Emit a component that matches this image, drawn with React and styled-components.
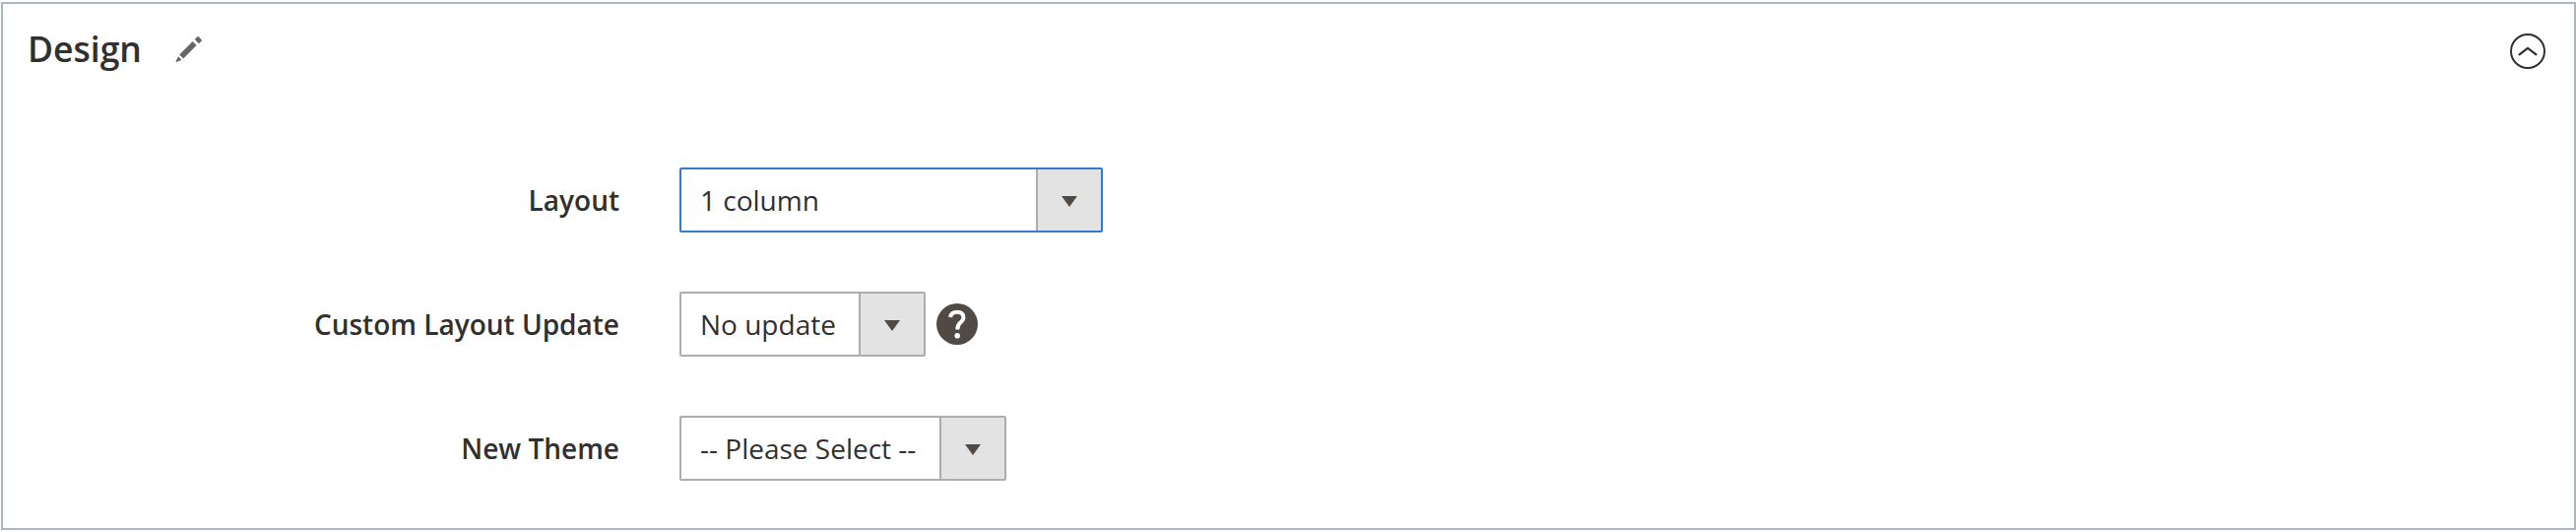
import React from "react";
import styled, { createGlobalStyle } from "styled-components";

const GlobalStyle = createGlobalStyle`
  *, *::before, *::after { box-sizing: border-box; }
  body { margin: 0; background: #fff; color: #303030; font-family: "Open Sans", sans-serif; }
`;

const Page = styled.main`
  height: 540px;
  padding: 2px 0 2px 1px;
`;

const Fieldset = styled.section`
  height: 536px;
  border: 2px solid #a9b8be;
`;

const Header = styled.header`
  display: flex;
  align-items: center;
  height: 92px;
  padding: 0 29px 0 25px;
`;

const Title = styled.h2`
  margin: 0;
  padding-bottom: 2px;
  font-size: 35.5px;
  font-weight: 600;
  line-height: 46px;
`;

const IconButton = styled.button`
  display: flex;
  padding: 0;
  border: 0;
  background: none;
  margin-left: ${({ $push }) => ($push ? "auto" : "34px")};
  margin-top: ${({ $push }) => ($push ? "4px" : "0")};
`;

const Fields = styled.div`
  display: grid;
  gap: 60px;
  padding-top: 74px;
`;

const Field = styled.div`
  display: grid;
  grid-template-columns: 626px 1fr;
  column-gap: 61px;
  align-items: center;
  height: 66px;
`;

const Label = styled.label`
  font-size: 28px;
  font-weight: 600;
  line-height: 38px;
  text-align: right;
`;

const Control = styled.div`
  display: flex;
  align-items: center;
  gap: 11px;
`;

const Select = styled.button`
  display: flex;
  width: ${({ $width }) => $width}px;
  height: 66px;
  padding: 0;
  border: 2px solid ${({ $focused }) => ($focused ? "#2f7bd6" : "#adadad")};
  border-radius: 2px;
  background: #fff;
  color: #303030;
  font: 400 28px/62px "Open Sans", sans-serif;
  text-align: left;
`;

const Value = styled.span`
  flex: 1;
  padding-left: 19px;
  white-space: nowrap;
`;

const Arrow = styled.span`
  display: flex;
  align-items: center;
  justify-content: center;
  width: 66px;
  height: 62px;
  border-left: 2px solid #adadad;
  background: #e3e3e3;

  &::after {
    content: "";
    margin-top: 3px;
    border: 8px solid transparent;
    border-top: 11px solid #514943;
    border-bottom: 0;
  }
`;

const Icon = styled.svg`
  display: block;
  flex: none;
`;

function PencilIcon() {
  return (
    <Icon width="28" height="28" viewBox="0 0 28 28" fill="#666">
      <path d="M4.2 19.4 17.6 6 21.6 10 8.2 23.6ZM19.8 4 22.4 1.3Q23.1.6 23.8 1.3L26.6 4.2Q27.3 4.9 26.6 5.7L23.9 8.3ZM3 21.2 6.5 24.8 1.3 27Q.3 27.2.6 26.2Z" />
    </Icon>
  );
}

function CollapseIcon() {
  return (
    <Icon width="36" height="36" viewBox="0 0 36 36" fill="none" stroke="#303030" strokeWidth="2">
      <circle cx="18" cy="18" r="17" />
      <path d="M9.5 21.3 18 14.8 26.5 21.3" strokeWidth="2.2" strokeLinecap="round" />
    </Icon>
  );
}

function HelpIcon() {
  return (
    <Icon width="42" height="42" viewBox="0 0 42 42">
      <circle cx="21" cy="21" r="21" fill="#514943" />
      <path d="M14.1 14Q14.8 8.7 21 8.7Q27.4 8.7 27.4 14.3Q27.4 17 24.4 19.3Q21.3 21.7 21.3 26.5" fill="none" stroke="#fff" strokeWidth="4" />
      <circle cx="21.2" cy="32.7" r="2.8" fill="#fff" />
    </Icon>
  );
}

const fields = [
  { label: "Layout", value: "1 column", width: 430, focused: true },
  { label: "Custom Layout Update", value: "No update", width: 250, help: true },
  { label: "New Theme", value: "-- Please Select --", width: 332 },
];

export default function App() {
  return (
    <>
      <GlobalStyle />
      <Page>
        <Fieldset>
          <Header>
            <Title>Design</Title>
            <IconButton aria-label="Edit"><PencilIcon /></IconButton>
            <IconButton $push aria-label="Collapse"><CollapseIcon /></IconButton>
          </Header>
          <Fields>
            {fields.map((f) => (
              <Field key={f.label}>
                <Label>{f.label}</Label>
                <Control>
                  <Select $width={f.width} $focused={f.focused}>
                    <Value>{f.value}</Value>
                    <Arrow />
                  </Select>
                  {f.help && <HelpIcon />}
                </Control>
              </Field>
            ))}
          </Fields>
        </Fieldset>
      </Page>
    </>
  );
}
